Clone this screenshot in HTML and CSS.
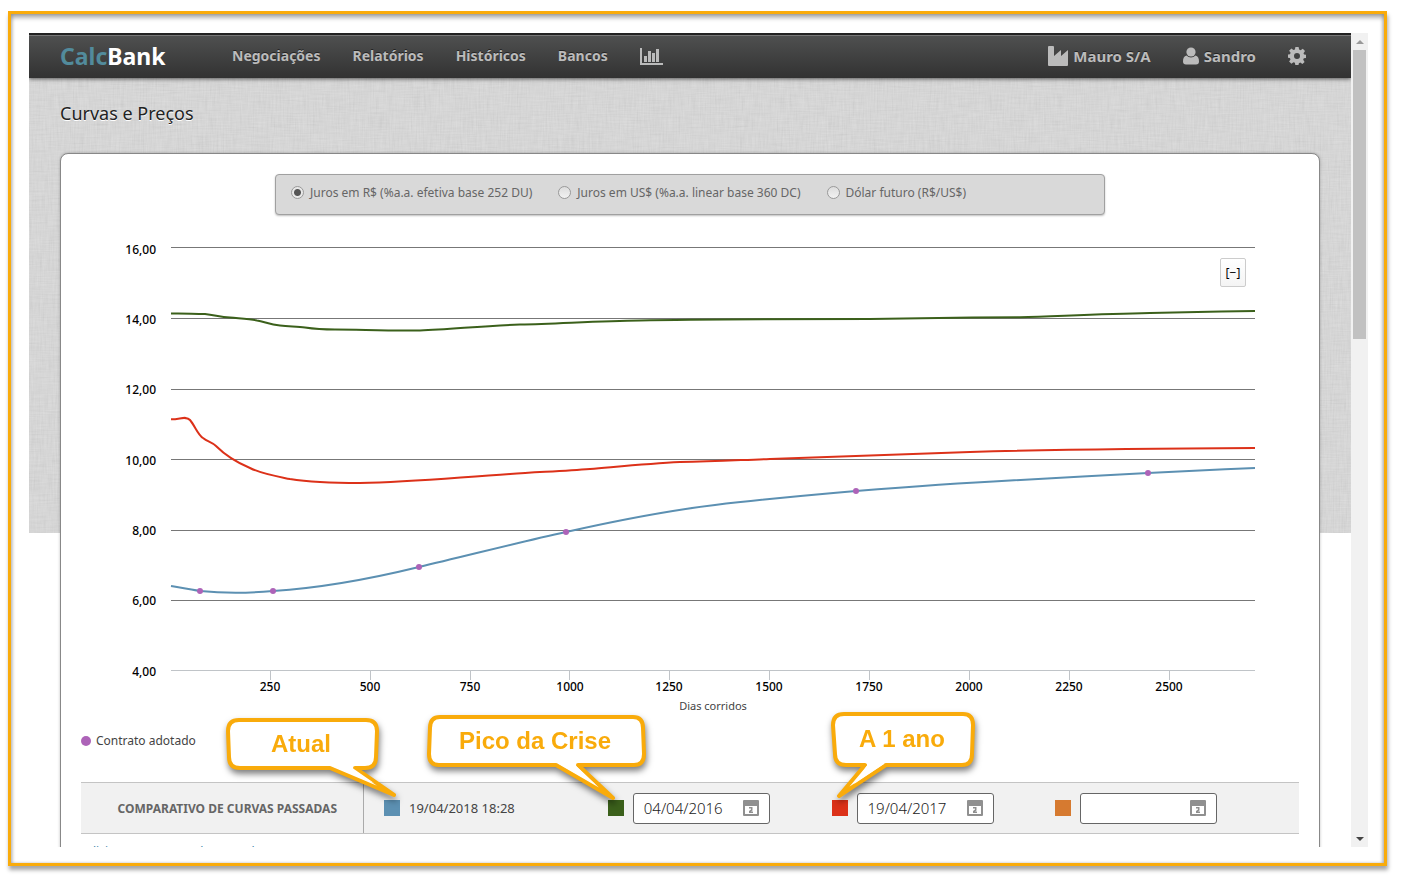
FILE: index.html
```html
<!DOCTYPE html>
<html lang="pt-BR">
<head>
<meta charset="utf-8">
<title>CalcBank - Curvas e Preços</title>
<link rel="stylesheet" href="styles.css">
</head>
<body>
<div class="frame">
  <div class="window">
    <div class="page">
      <header class="topbar">
        <a class="logo" href="#"><span class="logo-accent">Calc</span>Bank</a>
        <nav class="menu">
          <a href="#">Negociações</a>
          <a href="#">Relatórios</a>
          <a href="#">Históricos</a>
          <a href="#">Bancos</a>
          <a href="#" aria-label="Gráficos"><svg class="icon" width="23" height="17" viewBox="0 0 23 17"><path d="M0 0h2v15h21v2H0zM4 8h3v6H4zM8 3h3v11H8zM12 5h3v9h-3zM16 1h3v13h-3z"/></svg></a>
        </nav>
        <nav class="account">
          <a href="#"><svg class="icon" width="20" height="20" viewBox="0 0 20 20"><path d="M0 1q0-1 1-1h4q1 0 1 1v9l7-6v6l7-6v15q0 1-1 1H1q-1 0-1-1z"/></svg>Mauro S/A</a>
          <a href="#"><svg class="icon" width="16" height="18" viewBox="0 0 16 18"><circle cx="8" cy="5" r="4.600"/><path d="M3.500 8.500C1 9 0 11.500 0 14.500 0 16.500 1 17.500 3 17.500h10c2 0 3-1 3-3 0-3-1-5.500-3.500-6C10 11 6 11 3.500 8.500z"/></svg>Sandro</a>
          <a href="#" aria-label="Configurações"><svg class="icon" width="18" height="18" viewBox="0 0 18 18"><path fill-rule="evenodd" d="M7.400 0h3.200l.5 2.500 1.500.7L14.800 1.800 17 4.100l-1.500 2.100.6 1.300 2 .3v3.100l-2.300.4-.6 1.400L16.600 15l-2.200 2.100-2.100-1.500-1.400.6-.4 1.800H7.300l-.4-2.200-1.400-.6-2.100 1.500L1.100 14.500l1.400-2-.6-1.400L0 10.700V7.500l2-.3.6-1.400L1.100 3.800l2.300-2.200 2 1.400 1.500-.6zM9 6a3 3 0 1 0 0 6 3 3 0 0 0 0-6z"/></svg></a>
        </nav>
      </header>
      <h1>Curvas e Preços</h1>
      <main class="card">
        <form class="rates">
          <label><input type="radio" name="curva" checked>Juros em R$ (%a.a. efetiva base 252 DU)</label>
          <label><input type="radio" name="curva">Juros em US$ (%a.a. linear base 360 DC)</label>
          <label><input type="radio" name="curva">Dólar futuro (R$/US$)</label>
        </form>
        <div class="chart">
          <svg viewBox="81 235 1218 485" role="img" aria-label="Curvas de juros por dias corridos">
            <path class="grid-line" d="M171 247.500H1255M171 318.500H1255M171 389.500H1255M171 459.500H1255M171 530.500H1255M171 600.500H1255"/>
            <path class="axis" d="M171 670.500H1255M270.500 671v9M370.500 671v9M470.500 671v9M569.500 671v9M669.500 671v9M769.500 671v9M869.500 671v9M969.500 671v9M1069.500 671v9M1169.500 671v9"/>
            <g class="y-labels">
              <text x="156" y="254">16,00</text><text x="156" y="324">14,00</text><text x="156" y="394">12,00</text><text x="156" y="465">10,00</text><text x="156" y="535">8,00</text><text x="156" y="605">6,00</text><text x="156" y="676">4,00</text>
            </g>
            <g class="x-labels">
              <text x="270" y="691">250</text><text x="370" y="691">500</text><text x="470" y="691">750</text><text x="570" y="691">1000</text><text x="669" y="691">1250</text><text x="769" y="691">1500</text><text x="869" y="691">1750</text><text x="969" y="691">2000</text><text x="1069" y="691">2250</text><text x="1169" y="691">2500</text>
            </g>
            <text class="axis-title" x="713" y="710">Dias corridos</text>
            <path class="curve green" d="M171 313.500C185 313 192 314 205 314C215 315 220 317 230 317.500C240 318.500 250 319 257 320.500C265 322 270 324.500 280 325.500C290 326.500 298 326.500 305 327.500C315 329 322 329.500 335 329.500C360 329.500 385 331 420 330.500C450 329.500 480 326 520 324.500C560 323.500 600 321 640 320.500C700 319 790 319 870 319C930 318 970 317.500 1020 317.200C1060 316 1100 314 1150 313C1190 312 1220 311.500 1255 311"/>
            <path class="curve red" d="M171 419.300C180 419.500 186 415.500 190 420C195 426 198 435 203 438C208 442 211 441.500 216 446C226 456 238 463 250 468C262 474 275 476 290 479C312 482.500 335 483 360 483C410 482.500 450 478 510 474C540 472 565 471 590 469C625 466 650 463.500 680 462C715 461.500 740 460 770 459C820 457 870 455 970 452C1040 450 1140 448.500 1255 448"/>
            <path class="curve blue" d="M171 586C182 588 192 590 200 591C220 593 245 593.500 273 591C320 588 370 579 419 567C470 555 520 542 566 532C615 521 665 511 715 505C765 499 810 495 856 491C905 487 960 483 1010 480.500C1060 478 1100 475.500 1148 473C1190 471 1220 469.500 1255 468"/>
            <g class="points"><circle cx="200" cy="591" r="3"/><circle cx="273" cy="591" r="3"/><circle cx="419" cy="567" r="3"/><circle cx="566" cy="532" r="3"/><circle cx="856" cy="491" r="3"/><circle cx="1148" cy="473" r="3"/></g>
          </svg>
          <button class="collapse" type="button">[−]</button>
        </div>
        <div class="legend"><span class="dot"></span>Contrato adotado</div>
        <section class="compare">
          <h2>Comparativo de curvas passadas</h2>
          <div class="series">
            <div class="item"><span class="swatch blue"></span><span class="now">19/04/2018 18:28</span>
              <svg class="callout current" width="180" height="90" viewBox="220 712 180 90"><path d="M239 720H366Q377 720 377 731L376 757Q376 768 365 768H355L394 795 330 768H240Q229 768 229 757L228 731Q228 720 239 720Z"/><path class="inner" d="M334 767H351L374 783Z"/><text x="301" y="752">Atual</text></svg>
            </div>
            <div class="item"><label for="d1" class="swatch green" aria-label="Data da curva verde"></label><span class="date"><input id="d1" type="text" value="04/04/2016"><svg width="16" height="16" viewBox="0 0 16 16"><path fill-rule="evenodd" d="M1 0h14q1 0 1 1v14q0 1-1 1H1q-1 0-1-1V1q0-1 1-1zM2 6v8h12V6z"/><path d="M6 7h3.500v3.500L8 11.500h2V13H6v-2l2-1.500v-1H6z"/></svg></span>
              <svg class="callout peak" width="230" height="94" viewBox="422 710 230 94"><path d="M440 717H633Q643 717 643 728L644 754Q644 765 634 765H578L613 798 556 765H439Q429 765 429 754L430 728Q430 717 440 717Z"/><path class="inner" d="M559 764H574L596 785Z"/><text x="535" y="749">Pico da Crise</text></svg>
            </div>
            <div class="item"><label for="d2" class="swatch red" aria-label="Data da curva vermelha"></label><span class="date"><input id="d2" type="text" value="19/04/2017"><svg width="16" height="16" viewBox="0 0 16 16"><path fill-rule="evenodd" d="M1 0h14q1 0 1 1v14q0 1-1 1H1q-1 0-1-1V1q0-1 1-1zM2 6v8h12V6z"/><path d="M6 7h3.500v3.500L8 11.500h2V13H6v-2l2-1.500v-1H6z"/></svg></span>
              <svg class="callout year" width="156" height="98" viewBox="825 706 156 98"><path d="M844 714H963Q973 714 973 725L972 754Q972 765 962 765H886L839 796 865 765H846Q835 765 835 754L833 725Q833 714 844 714Z"/><path class="inner" d="M868 764H884L854 784Z"/><text x="902" y="747">A 1 ano</text></svg>
            </div>
            <div class="item"><label for="d3" class="swatch orange" aria-label="Data da curva laranja"></label><span class="date"><input id="d3" type="text" value=""><svg width="16" height="16" viewBox="0 0 16 16"><path fill-rule="evenodd" d="M1 0h14q1 0 1 1v14q0 1-1 1H1q-1 0-1-1V1q0-1 1-1zM2 6v8h12V6z"/><path d="M6 7h3.500v3.500L8 11.500h2V13H6v-2l2-1.500v-1H6z"/></svg></span></div>
          </div>
        </section>
        <a class="more" href="#">Adicionar um ponto de curva do momento</a>
      </main>
    </div>
    <div class="scrollbar"><span class="arrow up"></span><span class="thumb"></span><span class="arrow down"></span></div>
  </div>
</div>
</body>
</html>
```
FILE: styles.css
```css
* { box-sizing: border-box; }
body {
  margin: 0;
  height: 100vh;
  padding: 11px 21px 16px 8px;
  display: flex;
  background: #fff;
  color: #444;
  font: 13px/20px "Noto Sans", "Open Sans", sans-serif;
}
a { color: inherit; text-decoration: none; }
.frame {
  flex: 1;
  min-width: 0;
  display: flex;
  padding: 19px 16px 16px 18px;
  border: 3px solid #f9ab0b;
  box-shadow: 1px 4px 4px rgba(0,0,0,.35), inset 0 4px 4px rgba(0,0,0,.3), inset -2px 0 3px rgba(0,0,0,.15), inset 2px 0 3px rgba(0,0,0,.12);
}
.window { flex: 1; min-width: 0; display: flex; overflow: hidden; }
.page {
  flex: 1;
  min-width: 0;
  overflow: hidden;
  background: url("data:image/svg+xml,%3Csvg xmlns='http://www.w3.org/2000/svg' width='1600' height='500'%3E%3Cfilter id='h' x='0' y='0' width='100%25' height='100%25'%3E%3CfeTurbulence type='fractalNoise' baseFrequency='.05 .7' numOctaves='2'/%3E%3CfeColorMatrix type='saturate' values='0'/%3E%3CfeComponentTransfer%3E%3CfeFuncA type='linear' slope='0' intercept='1'/%3E%3C/feComponentTransfer%3E%3C/filter%3E%3Cfilter id='v' x='0' y='0' width='100%25' height='100%25'%3E%3CfeTurbulence type='fractalNoise' baseFrequency='.7 .05' numOctaves='2'/%3E%3CfeColorMatrix type='saturate' values='0'/%3E%3CfeComponentTransfer%3E%3CfeFuncA type='linear' slope='0' intercept='1'/%3E%3C/feComponentTransfer%3E%3C/filter%3E%3Crect width='1600' height='500' fill='%23dddddd'/%3E%3Crect width='1600' height='500' filter='url(%23h)' opacity='.1'/%3E%3Crect width='1600' height='500' filter='url(%23v)' opacity='.1'/%3E%3C/svg%3E") 0 0 repeat-x;
}
.topbar {
  height: 45px;
  padding: 0 45px 0 31px;
  display: flex;
  align-items: center;
  border-top: 1px solid #222;
  background: linear-gradient(#505151, #323232);
  box-shadow: inset 0 1px #222, inset 0 2px #777, 0 1px 4px rgba(0,0,0,.6);
  color: #bbb;
  font-size: 14px;
  font-weight: 700;
}
.logo { width: 172px; color: #fff; font-size: 23px; }
.logo-accent { color: #528b9c; }
.menu, .account { display: flex; align-items: center; gap: 32px; }
.account { margin-left: auto; font-size: 15px; }
.menu a, .account a { display: flex; align-items: center; gap: 5px; text-shadow: 0 -1px rgba(0,0,0,.5); }
.icon { fill: #bbb; }
h1 {
  margin: 20px 31px 25px;
  color: #222;
  font-size: 18px;
  font-weight: 400;
  line-height: 30px;
  text-shadow: 0 1px #fff;
}
.card {
  margin: 0 31px;
  padding: 20px;
  border: 1px solid #888;
  border-radius: 8px;
  background: #fff;
  box-shadow: 0 0 3px rgba(0,0,0,.25);
}
.rates {
  max-width: 830px;
  height: 41px;
  margin: 0 auto 20px;
  padding: 0 15px 4px;
  display: flex;
  align-items: center;
  gap: 26px;
  border: 1px solid #a0a0a0;
  border-radius: 4px;
  background: #d9d9d9;
  box-shadow: 0 1px 2px rgba(0,0,0,.25);
  color: #666;
  font-size: 12px;
}
.rates label { display: flex; align-items: center; gap: 6px; }
.rates input {
  appearance: none;
  width: 13px;
  height: 13px;
  margin: 0;
  border: 1px solid #999;
  border-radius: 50%;
  background: linear-gradient(#ddd, #f2f2f2);
}
.rates input:checked { background: radial-gradient(circle, #555 0 3px, #e8e8e8 4px); }
.chart { position: relative; }
.chart > svg { display: block; width: 100%; }
.chart text { font-size: 12px; fill: #000; }
.grid-line { stroke: #777; fill: none; }
.axis { stroke: #c0c4c8; fill: none; }
.y-labels text { text-anchor: end; font-weight: 500; }
.x-labels text { text-anchor: middle; font-weight: 500; }
.chart .axis-title { text-anchor: middle; font-size: 11px; fill: #444; }
.curve { fill: none; stroke-width: 2; }
.curve.green { stroke: #3b601b; }
.curve.red { stroke: #dc3119; }
.curve.blue { stroke: #5c90b2; }
.points { fill: #ad63b8; }
.collapse {
  position: absolute;
  top: 23px;
  right: 53px;
  width: 26px;
  height: 29px;
  padding: 0;
  border: 1px solid #ccc;
  border-radius: 2px;
  background: linear-gradient(#fff, #f4f4f4);
  color: #000;
  font: 12px "Noto Sans", sans-serif;
}
.legend { margin: 11px 0 31px; display: flex; align-items: center; gap: 5px; font-size: 12px; }
.dot { width: 10px; height: 10px; border-radius: 50%; background: #ad63b8; }
.compare {
  height: 52px;
  display: flex;
  border: solid #c4c4c4;
  border-width: 1px 0;
  background: #f1f1f1;
}
h2 {
  width: 283px;
  margin: 0;
  padding-right: 26px;
  border-right: 1px solid #aaa;
  color: #666;
  font-size: 12px;
  line-height: 52px;
  text-align: right;
  text-transform: uppercase;
}
.series { flex: 1; padding: 0 20px; display: grid; grid-template-columns: repeat(4, 1fr); }
.item { position: relative; display: flex; align-items: center; gap: 9px; }
.swatch { width: 16px; height: 16px; }
.swatch.blue { background: #5c90b2; }
.swatch.green { background: #3b601b; }
.swatch.red { background: #dc3119; }
.swatch.orange { background: #d67a30; }
.date {
  width: 137px;
  height: 31px;
  padding: 0 10px;
  display: flex;
  align-items: center;
  border: 1px solid #666;
  border-radius: 3px;
  background: #fff;
}
.date input { flex: 1; min-width: 0; padding: 0; border: 0; outline: 0; background: none; color: #222; font: 300 15px "Noto Sans", sans-serif; }
.date svg { fill: #909090; }
.callout { position: absolute; z-index: 2; overflow: visible; filter: drop-shadow(1px 4px 3px rgba(0,0,0,.5)); }
.callout path { fill: #fff; stroke: #f9ab0b; stroke-width: 4; stroke-linejoin: round; }
.callout .inner { stroke: none; }
.callout text { fill: #f9ab0b; font: bold 24px "Liberation Sans", Arial, sans-serif; text-anchor: middle; }
.current { left: -164px; top: -71px; }
.peak { left: -186px; top: -73px; }
.year { left: -7px; top: -77px; }
.more { display: block; margin-top: 8px; color: #3b83a8; font-size: 12px; }
.scrollbar { width: 17px; display: flex; flex-direction: column; align-items: center; background: #f1f1f1; }
.thumb { width: 13px; height: 289px; background: #c1c1c1; }
.arrow { border: 4px solid transparent; }
.arrow.up { margin: 3px 0 6px; border-bottom-color: #999; }
.arrow.down { margin: auto 0 2px; border-top-color: #444; }
```
